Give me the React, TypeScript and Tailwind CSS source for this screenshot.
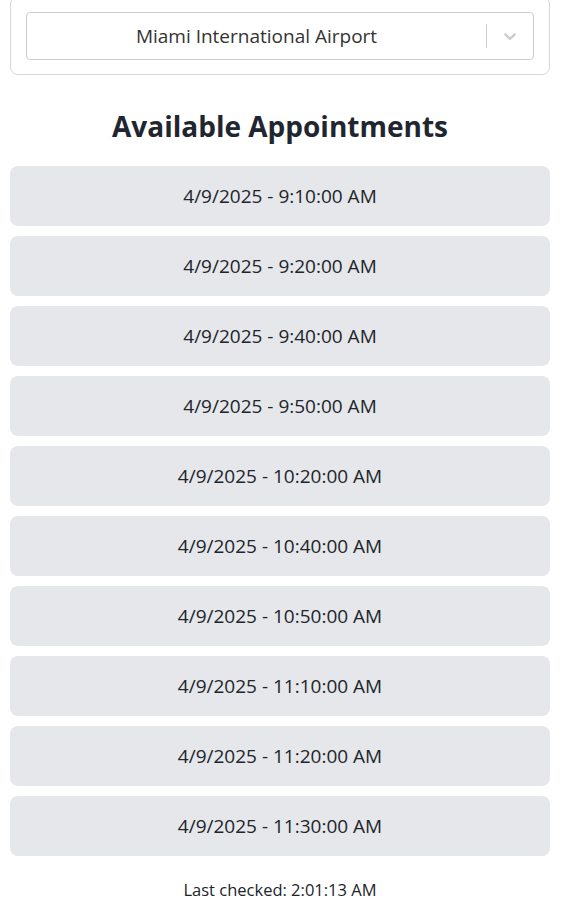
import React from "react";

const times = [
  "9:10:00 AM",
  "9:20:00 AM",
  "9:40:00 AM",
  "9:50:00 AM",
  "10:20:00 AM",
  "10:40:00 AM",
  "10:50:00 AM",
  "11:10:00 AM",
  "11:20:00 AM",
  "11:30:00 AM",
];

export default function App() {
  return (
    <div
      className="min-h-[909px] bg-white text-[#212529]"
      style={{ fontFamily: '"Open Sans", "Noto Sans", sans-serif' }}
    >
      <div className="ml-[10px] w-[540px]">
        <div className="-mt-[4px] rounded-lg border border-[#d4d6d9] px-[15px] pt-[15px] pb-[14px]">
          <div className="flex h-[48px] items-center rounded-[4px] border border-[#cccccc] bg-white">
            <div className="flex-1 text-center text-[19px] text-[#333333]">
              Miami International Airport
            </div>
            <div className="h-[24px] w-px bg-[#cccccc]" />
            <div className="flex w-[46px] items-center justify-center text-[#cccccc]">
              <svg width="20" height="20" viewBox="0 0 20 20" fill="currentColor">
                <path d="M4.516 7.548c0.436-0.446 1.043-0.481 1.576 0l3.908 3.747 3.908-3.747c0.533-0.481 1.141-0.446 1.574 0 0.436 0.445 0.408 1.197 0 1.615-0.406 0.418-4.695 4.502-4.695 4.502-0.217 0.223-0.502 0.335-0.787 0.335s-0.57-0.112-0.789-0.335c0 0-4.287-4.084-4.695-4.502s-0.436-1.17 0-1.615z" />
              </svg>
            </div>
          </div>
        </div>
        <h2 className="mt-[32px] mb-[21px] text-center text-[28px] font-bold leading-[38px] text-[#1f2630]">
          Available Appointments
        </h2>
        <div className="flex flex-col gap-[10px]">
          {times.map((t) => (
            <div
              key={t}
              className="flex h-[60px] items-center justify-center rounded-lg bg-[#e5e7eb] text-[19px] text-[#212529]"
            >
              4/9/2025 - {t}
            </div>
          ))}
        </div>
        <p className="mt-[22px] text-center text-[16.5px] text-[#212529]">
          Last checked: 2:01:13 AM
        </p>
      </div>
    </div>
  );
}
